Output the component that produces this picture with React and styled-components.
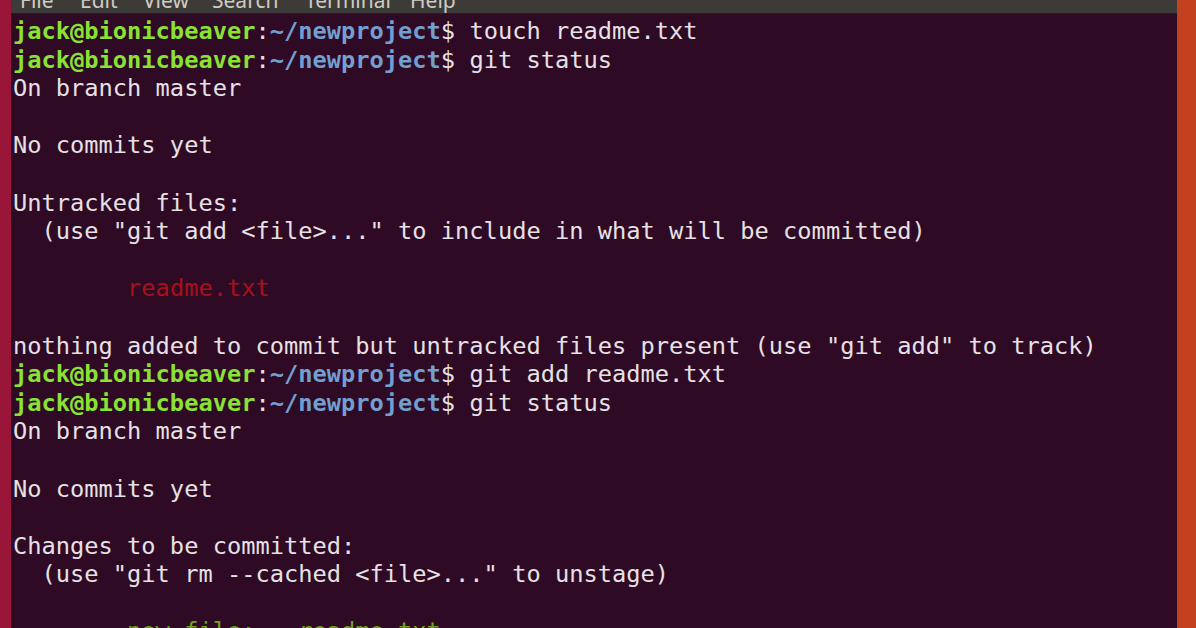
import React from "react";
import styled, { createGlobalStyle } from "styled-components";

const GlobalStyle = createGlobalStyle`
  html, body {
    margin: 0;
    padding: 0;
    background: #2e0a23;
  }
  #root {
    height: 628px;
  }
`;

const Screen = styled.div`
  display: flex;
  width: 1196px;
  height: 628px;
  overflow: hidden;
`;

const Desktop = styled.div`
  width: ${(p) => p.width}px;
  flex-shrink: 0;
  background: ${(p) => p.bg};
`;

const Window = styled.div`
  flex: 1;
  display: flex;
  flex-direction: column;
  background: #2f0a24;
  overflow: hidden;
`;

const MenuBar = styled.div`
  height: 13px;
  flex-shrink: 0;
  background: #3d3b37;
  border-bottom: 1px solid #241e21;
  display: flex;
  align-items: flex-end;
  padding-left: 9px;
  overflow: hidden;
`;

const MenuItem = styled.span`
  width: ${(p) => p.slot}px;
  font-family: "Noto Sans", "DejaVu Sans", sans-serif;
  font-size: 21px;
  line-height: 22px;
  height: 22px;
  margin-bottom: 2px;
  color: #cfcbc4;
  flex-shrink: 0;
`;

const Output = styled.pre`
  margin: 0;
  padding: 3px 0 0 2px;
  font-family: "DejaVu Sans Mono", "Liberation Mono", monospace;
  font-size: 23.7px;
  line-height: 28.6px;
  color: #e6e1e4;
  white-space: pre;
`;

const Line = styled.div`
  height: 28.6px;
`;

const User = styled.span`
  color: #8ae234;
  font-weight: bold;
`;

const Path = styled.span`
  color: #729fcf;
  font-weight: bold;
`;

const Tone = styled.span`
  color: ${(p) => p.color};
`;

const Prompt = ({ cmd }) => (
  <Line>
    <User>jack@bionicbeaver</User>:<Path>~/newproject</Path>$ {cmd}
  </Line>
);

const menu = [
  ["File", 60],
  ["Edit", 63],
  ["View", 69],
  ["Search", 93],
  ["Terminal", 105],
  ["Help", 60],
];

export default function App() {
  return (
    <>
      <GlobalStyle />
      <Screen>
        <Desktop width={11} bg="#9a1638" />
        <Window>
          <MenuBar>
            {menu.map(([label, slot]) => (
              <MenuItem key={label} slot={slot}>
                {label}
              </MenuItem>
            ))}
          </MenuBar>
          <Output>
            <Prompt cmd="touch readme.txt" />
            <Prompt cmd="git status" />
            <Line>On branch master</Line>
            <Line> </Line>
            <Line>No commits yet</Line>
            <Line> </Line>
            <Line>Untracked files:</Line>
            <Line>{'  (use "git add <file>..." to include in what will be committed)'}</Line>
            <Line> </Line>
            <Line>
              {"        "}
              <Tone color="#a8101a">readme.txt</Tone>
            </Line>
            <Line> </Line>
            <Line>nothing added to commit but untracked files present (use "git add" to track)</Line>
            <Prompt cmd="git add readme.txt" />
            <Prompt cmd="git status" />
            <Line>On branch master</Line>
            <Line> </Line>
            <Line>No commits yet</Line>
            <Line> </Line>
            <Line>Changes to be committed:</Line>
            <Line>{'  (use "git rm --cached <file>..." to unstage)'}</Line>
            <Line> </Line>
            <Line>
              {"        "}
              <Tone color="#6fa21c">new file:   readme.txt</Tone>
            </Line>
          </Output>
        </Window>
        <Desktop width={19} bg="#c4411f" />
      </Screen>
    </>
  );
}
